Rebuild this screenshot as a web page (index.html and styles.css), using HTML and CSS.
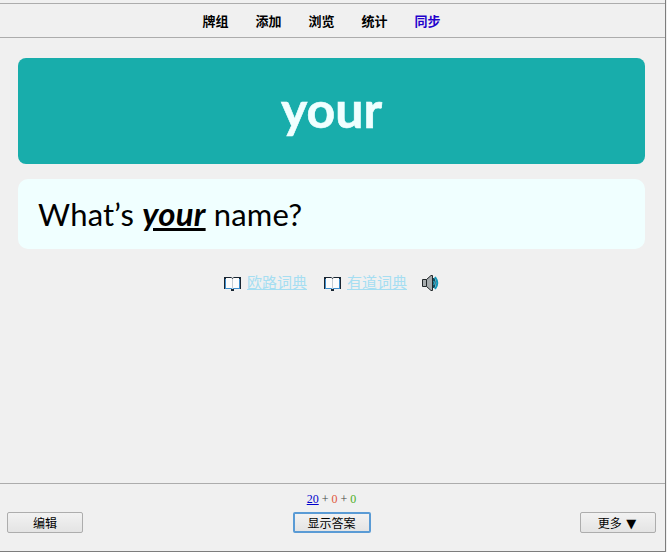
FILE: index.html
```html
<!DOCTYPE html>
<html lang="zh">
<head>
<meta charset="utf-8">
<title>Card</title>
<link rel="stylesheet" href="styles.css">
</head>
<body>
<div class="window">
  <nav class="menu">
    <a class="menu-item">牌组</a>
    <a class="menu-item">添加</a>
    <a class="menu-item">浏览</a>
    <a class="menu-item">统计</a>
    <a class="menu-item sync">同步</a>
  </nav>
  <main class="card">
    <div class="word">your</div>
    <div class="sentence">What’s <b class="hl">your</b> name?</div>
    <div class="links">
      <svg class="book" width="17" height="15" viewBox="0 0 17 15"><path d="M0 1H7L8.5 2L10 1H17V13H10V15H7V13H0Z" fill="#1a2632"/><path d="M1 3H16V13H1Z" fill="#3f8fce"/><path d="M2 2H7.5L8.5 3L9.5 2H15V12H9.5L8.5 13L7.5 12H2Z" fill="#fcfcfc"/><path d="M8 3H9V12H8Z" fill="#c4ccd4"/></svg>
      <a class="dict">欧路词典</a>
      <svg class="book second" width="17" height="15" viewBox="0 0 17 15"><path d="M0 1H7L8.5 2L10 1H17V13H10V15H7V13H0Z" fill="#1a2632"/><path d="M1 3H16V13H1Z" fill="#3f8fce"/><path d="M2 2H7.5L8.5 3L9.5 2H15V12H9.5L8.5 13L7.5 12H2Z" fill="#fcfcfc"/><path d="M8 3H9V12H8Z" fill="#c4ccd4"/></svg>
      <a class="dict">有道词典</a>
      <svg class="speaker" width="18" height="16" viewBox="0 0 18 16"><path d="M0.5 4.5H4.5L9 0.5H10.5V15.5H9L4.5 11.5H0.5Z" fill="#a6abad" stroke="#22282a"/><path d="M4.5 4.5V11.5" stroke="#22282a"/><path d="M11 3H12.5Q15 8 12.5 13H11Z" fill="#0e4f63"/><path d="M13 2Q17.5 8 13 14" fill="none" stroke="#1196b8" stroke-width="2"/><path d="M11.8 6Q13 8 11.8 10" fill="none" stroke="#35c0e0" stroke-width="1"/></svg>
    </div>
  </main>
  <footer class="bottom">
    <div class="counts"><a class="new">20</a> <span class="plus">+</span> <span class="lrn">0</span> <span class="plus">+</span> <span class="due">0</span></div>
    <div class="actions">
      <button class="btn">编辑</button>
      <button class="btn primary">显示答案</button>
      <button class="btn more">更多 <span class="arrow">▼</span></button>
    </div>
  </footer>
</div>
</body>
</html>
```
FILE: styles.css
```css
html, body {
  margin: 0;
  padding: 0;
  background: #f0f0f0;
}
.window {
  box-sizing: border-box;
  width: 666px;
  height: 552px;
  padding-top: 3px;
  border-right: 1px solid #7d7d7d;
  border-bottom: 1px solid #7d7d7d;
  display: flex;
  flex-direction: column;
  font-family: "Liberation Sans", "Noto Sans CJK SC", sans-serif;
}
.menu {
  box-sizing: border-box;
  height: 35px;
  border-top: 1px solid #acacac;
  border-bottom: 1px solid #acacac;
  display: flex;
  justify-content: center;
  align-items: center;
  gap: 27px;
  padding-right: 22px;
  font-size: 13px;
  font-weight: 700;
  color: #000;
}
.menu-item { cursor: pointer; }
.sync { color: #2200cc; }
.card {
  flex: 1;
  padding: 20px 20px 0 18px;
  display: flex;
  flex-direction: column;
  min-height: 0;
}
.word {
  height: 106px;
  border-radius: 8px;
  background: #18adab;
  color: #f0ffff;
  font-family: Lato, "Open Sans", sans-serif;
  font-size: 50px;
  font-weight: 700;
  -webkit-text-stroke: 0.6px #f0ffff;
  line-height: 102px;
  text-align: center;
}
.sentence {
  margin-top: 15px;
  height: 70px;
  border-radius: 10px;
  background: #f0ffff;
  color: #000;
  font-family: Lato, "Open Sans", sans-serif;
  font-size: 31px;
  letter-spacing: 0.2px;
  line-height: 68px;
  padding-left: 20px;
}
.hl {
  font-size: 33px;
  font-style: italic;
  text-decoration: underline;
}
.links {
  margin-top: 25px;
  display: flex;
  justify-content: center;
  align-items: center;
  height: 18px;
  padding-left: 1px;
}
.dict {
  margin-left: 6px;
  font-size: 15px;
  line-height: 18px;
  color: #a6def2;
  text-decoration: underline;
  cursor: pointer;
}
.second { margin-left: 17px; }
.speaker { margin-left: 15px; }
.bottom {
  box-sizing: border-box;
  height: 68px;
  border-top: 1px solid #acacac;
  padding: 8px 9px 0 7px;
}
.counts {
  text-align: center;
  font-family: "Liberation Serif", serif;
  font-size: 12px;
  line-height: 14px;
  color: #000;
}
.new { color: #0000cc; text-decoration: underline; }
.plus { color: #444; }
.lrn { color: #e0563c; }
.due { color: #4caf1e; }
.actions {
  margin-top: 6px;
  display: flex;
  justify-content: space-between;
  align-items: center;
}
.btn {
  box-sizing: border-box;
  width: 76px;
  height: 21px;
  padding: 0;
  border: 1px solid #adadad;
  border-radius: 2px;
  background: linear-gradient(#f2f2f2, #e4e4e4);
  font-family: "Liberation Sans", "Noto Sans CJK SC", sans-serif;
  font-size: 12px;
  color: #000;
}
.primary {
  width: 78px;
  border: 2px solid #5a9bd5;
}
.more { padding-right: 2px; }
.arrow {
  margin-left: 1px;
  font-family: "DejaVu Sans", sans-serif;
  font-size: 13px;
}
```
